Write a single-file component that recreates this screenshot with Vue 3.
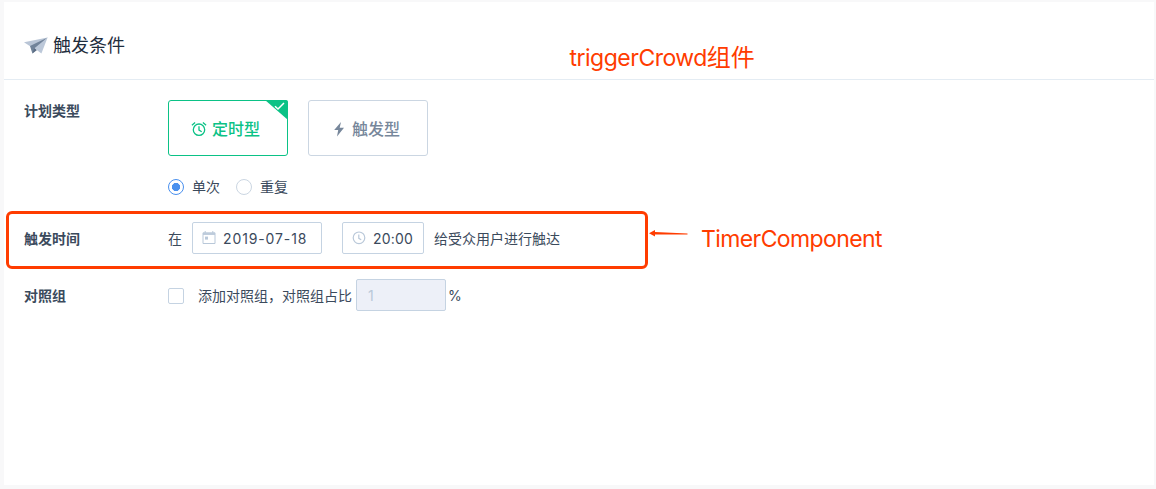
<script setup>
import { ref } from 'vue'

const repeat = ref('once')
const radios = [
  { value: 'once', label: '单次' },
  { value: 'repeat', label: '重复' },
]
</script>

<template>
  <div class="page">
    <section class="card">
      <header class="head">
        <svg class="plane" width="24" height="18" viewBox="0 0 24 18">
          <path d="M0 5.2 23.6 0.4 7.2 10Z" fill="#b9c5d6" />
          <path d="M6 9 23.6 0.4 8.4 16.4Z" fill="#71839a" />
          <path d="M10.4 11.2 23.6 0.4 17.4 16.6Z" fill="#bcc8d9" />
          <path d="M8.4 16.4 10.2 11.3 12.8 13.3Z" fill="#5b6d84" />
        </svg>
        <h1 class="title">触发条件</h1>
      </header>

      <div class="row type-row">
        <div class="label">计划类型</div>
        <div class="types">
          <button class="type active">
            <svg width="16" height="16" viewBox="0 0 16 16" fill="none" stroke="currentColor" stroke-width="1.3">
              <circle cx="8" cy="8.7" r="5.7" />
              <path d="M8 5.2v3.9l2.7 1.6M0.9 4.3 4.1 1.6M15.1 4.3 11.9 1.6" />
            </svg>
            <span>定时型</span>
            <svg class="corner" width="23" height="20" viewBox="0 0 23 20">
              <path d="M0 0h21a2 2 0 0 1 2 2v18Z" fill="#0bc286" />
              <path d="m10 6.2 3 2.8 6-6" fill="none" stroke="#fff" stroke-width="1.5" />
            </svg>
          </button>
          <button class="type">
            <svg width="16" height="16" viewBox="0 0 16 16">
              <path d="M10 1 3.2 9h4L6 15.4l7-8.6H8.7Z" fill="currentColor" />
            </svg>
            <span>触发型</span>
          </button>
        </div>
      </div>

      <div class="radios">
        <label v-for="r in radios" :key="r.value" class="radio" @click="repeat = r.value">
          <i class="dot" :class="{ on: repeat === r.value }"></i>
          <span>{{ r.label }}</span>
        </label>
      </div>

      <div class="row time-row">
        <div class="label drop">触发时间</div>
        <span class="at drop">在</span>
        <div class="field date">
          <svg width="14" height="14" viewBox="0 0 14 14" fill="none" stroke="#b9c8d9">
            <path d="M1 1.8h12v10.7H1ZM1 2.6h12M1 3.4h12M3.2 0v2M10.8 0v2" />
            <path d="M3 5.6h3v3H3Z" fill="#b9c8d9" stroke="none" />
          </svg>
          <span class="num">2019-07-18</span>
        </div>
        <div class="field clock">
          <svg width="14" height="14" viewBox="0 0 14 14" fill="none" stroke="#b9c8d9" stroke-width="1.2">
            <circle cx="7" cy="6.8" r="5.8" />
            <path d="M6.8 3.4v3.9l2.4 1.5" />
          </svg>
          <span class="num">20:00</span>
        </div>
        <span class="reach drop">给受众用户进行触达</span>
      </div>

      <div class="row group-row">
        <div class="label drop">对照组</div>
        <i class="check"></i>
        <span class="group-text drop">添加对照组，对照组占比</span>
        <div class="field ratio"><span>1</span></div>
        <span class="percent drop">%</span>
      </div>
    </section>

    <div class="frame"></div>
    <svg class="arrow" width="40" height="10" viewBox="0 0 40 10" fill="#ff3c00">
      <path d="M0 4.2 6 1v2L38.5 4.6v1L6 5.6V7.6Z" />
    </svg>
    <div class="note crowd">triggerCrowd<span class="cn">组件</span></div>
    <div class="note timer">TimerComponent</div>
  </div>
</template>

<style>
body {
  background: #f8f8fa;
}
</style>

<style scoped>
.page {
  position: relative;
  box-sizing: border-box;
  width: 1156px;
  height: 489px;
  padding: 2px 2px 4px 4px;
  overflow: hidden;
  background: #f8f8f9;
  color: #3b4a5c;
  font: 14px/20px Inter, "Noto Sans CJK SC", sans-serif;
}
.page * {
  box-sizing: border-box;
}
.card {
  height: 483px;
  background: #fff;
}
.head {
  display: flex;
  align-items: center;
  height: 78px;
  padding: 10px 20px 0;
  border-bottom: 1px solid #e4ecf3;
}
.plane {
  margin-right: 5px;
}
.title {
  margin: 0;
  padding-top: 1px;
  color: #1f2d3d;
  font-size: 18px;
  font-weight: 400;
  line-height: 26px;
}
.row {
  display: flex;
  align-items: center;
  padding-left: 20px;
  white-space: nowrap;
}
.label {
  flex: none;
  width: 144px;
  font-weight: 700;
}
.type-row {
  align-items: flex-start;
  padding-top: 20px;
}
.type-row .label {
  margin-top: 1px;
}
.types {
  display: flex;
  gap: 20px;
}
.type {
  position: relative;
  display: flex;
  align-items: center;
  justify-content: center;
  gap: 5px;
  width: 120px;
  height: 56px;
  padding: 2px 5px 0 0;
  border: 1px solid #cbd6e2;
  border-radius: 3px;
  background: #fff;
  color: #77879b;
  font: 500 16px/24px Inter, "Noto Sans CJK SC", sans-serif;
}
.type.active {
  border-color: #0bc286;
  color: #0bc286;
}
.corner {
  position: absolute;
  top: -1px;
  right: -1px;
}
.radios {
  display: flex;
  gap: 16px;
  margin-top: 21px;
  padding-left: 164px;
}
.radio {
  display: flex;
  align-items: center;
  gap: 8px;
}
.dot {
  width: 16px;
  height: 16px;
  border: 1px solid #cbd6e2;
  border-radius: 50%;
}
.dot.on {
  border-color: #4a90ee;
  background: radial-gradient(circle, #4a90ee 3.8px, transparent 4.4px);
}
.time-row {
  height: 32px;
  margin-top: 25px;
}
.drop {
  padding-top: 2px;
}
.at {
  width: 24px;
}
.field {
  display: flex;
  align-items: center;
  height: 32px;
  padding-left: 9px;
  border: 1px solid #c5d3e2;
  border-radius: 2px;
}
.num {
  margin-left: 7px;
  padding-top: 2px;
  font-size: 14px;
  letter-spacing: 0.2px;
}
.date {
  width: 130px;
}
.date .num {
  letter-spacing: 0.88px;
}
.clock {
  width: 82px;
  margin-left: 20px;
}
.reach {
  margin-left: 10px;
}
.group-row {
  height: 32px;
  margin-top: 25px;
}
.check {
  width: 16px;
  height: 16px;
  margin-top: 1px;
  border: 1px solid #c5d3e2;
  border-radius: 2px;
}
.group-text {
  width: 158px;
  margin-left: 14px;
}
.ratio {
  width: 90px;
  padding-left: 11px;
  background: #edf0f8;
  color: #b9c8d9;
}
.ratio span {
  padding-top: 2px;
}
.percent {
  margin-left: 2px;
}
.frame {
  position: absolute;
  top: 211px;
  left: 6px;
  width: 642px;
  height: 58px;
  border: 3px solid #ff3c00;
  border-radius: 6px;
}
.arrow {
  position: absolute;
  top: 229px;
  left: 649px;
}
.note {
  position: absolute;
  color: #ff3c00;
  font-size: 23px;
  line-height: 32px;
  letter-spacing: -0.6px;
  white-space: nowrap;
}
.crowd {
  top: 42px;
  left: 569.5px;
  letter-spacing: -0.5px;
}
.cn {
  font-size: 24px;
  letter-spacing: 0;
}
.timer {
  top: 223px;
  left: 701px;
}
</style>
